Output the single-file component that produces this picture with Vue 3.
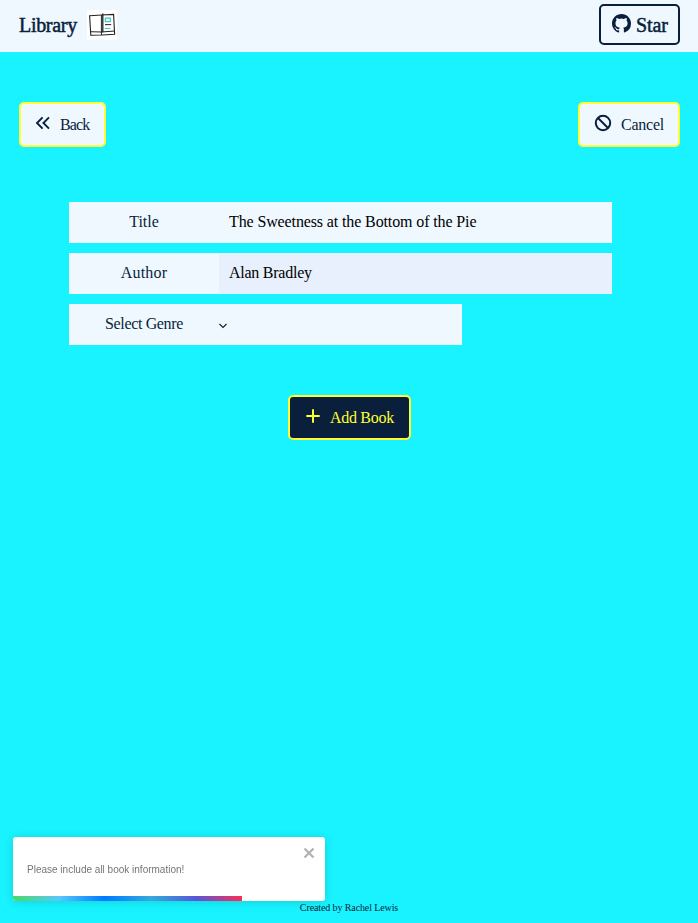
<script setup>
import { ref } from 'vue'

const title = ref('The Sweetness at the Bottom of the Pie')
const author = ref('Alan Bradley')
const toastOpen = ref(true)
</script>

<template>
  <div class="page">
    <header class="nav">
      <div class="brand">
        <span class="brand-name">Library</span>
        <svg class="book" viewBox="0 0 30 30" fill="none">
          <rect width="30" height="30" fill="#fff" />
          <path d="M2.600 5.800 14.500 5 26.600 4.400 27.600 24.300 15 25 3.800 25.300Z" stroke="#222" stroke-width="1.100" />
          <path d="M3 21.700 14.500 22 27.500 21M14.400 5v20" stroke="#222" stroke-width="1" />
          <path d="M15.800 3.400v18.800" stroke="#222" stroke-width="1.300" />
          <path d="M18.300 8.100h5v3.600h-5zM17.800 18.500h5.500" stroke="#3dc8c8" stroke-width="1.200" />
          <path d="M18 14.600h6.200" stroke="#333" stroke-width="1.100" />
        </svg>
      </div>
      <button class="star">
        <svg width="19" height="19" viewBox="0 0 16 16" fill="currentColor">
          <path d="M8 0C3.58 0 0 3.58 0 8c0 3.54 2.29 6.53 5.47 7.59.4.07.55-.17.55-.38 0-.19-.01-.82-.01-1.49-2.01.37-2.53-.49-2.69-.94-.09-.23-.48-.94-.82-1.13-.28-.15-.68-.52-.01-.53.63-.01 1.08.58 1.23.82.72 1.21 1.87.87 2.33.66.07-.52.28-.87.51-1.07-1.78-.2-3.64-.89-3.64-3.95 0-.87.31-1.59.82-2.15-.08-.2-.36-1.02.08-2.12 0 0 .67-.21 2.2.82a7.6 7.6 0 0 1 4 0c1.53-1.04 2.2-.82 2.2-.82.44 1.1.16 1.92.08 2.12.51.56.82 1.27.82 2.15 0 3.07-1.87 3.75-3.65 3.95.29.25.54.73.54 1.48 0 1.07-.01 1.93-.01 2.2 0 .21.15.46.55.38A8 8 0 0 0 16 8c0-4.42-3.58-8-8-8z" />
        </svg>
        <span class="star-text">Star</span>
      </button>
    </header>

    <div class="actions">
      <button class="btn back">
        <svg width="16" height="16" viewBox="0 0 16 16" fill="none" stroke="currentColor" stroke-width="1.9">
          <path d="M7.6 2.3 2 8l5.6 5.7M14 2.3 8.4 8l5.6 5.7" />
        </svg>
        <span class="back-text">Back</span>
      </button>
      <button class="btn cancel">
        <svg width="18" height="18" viewBox="0 0 18 18" fill="none" stroke="currentColor" stroke-width="2">
          <circle cx="9" cy="9" r="7.2" />
          <path d="m4 4 10 10" />
        </svg>
        <span class="cancel-text">Cancel</span>
      </button>
    </div>

    <form class="form" @submit.prevent>
      <div class="row">
        <label class="title-label" for="title">Title</label>
        <input id="title" v-model="title" class="title-input" type="text" />
      </div>
      <div class="row">
        <label class="author-label" for="author">Author</label>
        <input id="author" v-model="author" class="author-input" type="text" />
      </div>
      <div class="row genre">
        <label class="genre-label">Select Genre</label>
        <svg class="chevron" width="8" height="6" viewBox="0 0 8 6" fill="none" stroke="currentColor" stroke-width="1.1">
          <path d="m.5 1 3.500 3.500L7.500 1" />
        </svg>
      </div>
      <button class="btn add">
        <svg width="16" height="16" viewBox="0 0 16 16" fill="none" stroke="currentColor" stroke-width="2">
          <path d="M8 1.300v13.400M1.300 8h13.400" />
        </svg>
        <span class="add-text">Add Book</span>
      </button>
    </form>

    <footer class="footer"><span>Created by Rachel Lewis</span></footer>

    <div v-if="toastOpen" class="toast">
      <span class="toast-text">Please include all book information!</span>
      <button class="close" aria-label="Close" @click="toastOpen = false">
        <svg width="12" height="12" viewBox="0 0 12 12" fill="none" stroke="#b3b3b3" stroke-width="2.300">
          <path d="m1.500 1.500 9 9m0-9-9 9" />
        </svg>
      </button>
      <div class="progress"></div>
    </div>
  </div>
</template>

<style>
body {
  background: #18f3ff;
}
</style>

<style scoped>
.page {
  box-sizing: border-box;
  height: 923px;
  display: flex;
  flex-direction: column;
  background: #18f3ff;
  color: #0a1f3c;
  font-family: "Liberation Serif", serif;
  font-size: 16px;
  line-height: 20px;
}
.page * {
  box-sizing: border-box;
}
svg {
  display: block;
  flex: none;
}
button {
  font: inherit;
  color: inherit;
  margin: 0;
  padding: 0;
}
span,
label {
  white-space: nowrap;
}
.nav {
  height: 52px;
  flex: none;
  display: flex;
  align-items: flex-start;
  justify-content: space-between;
  padding: 4px 18px 0 19px;
  background: #f0f8ff;
}
.brand {
  display: flex;
  align-items: center;
  padding-top: 6px;
}
.brand-name {
  width: 68px;
  font-size: 20px;
  letter-spacing: -0.3px;
  -webkit-text-stroke: 0.5px currentColor;
}
.book {
  width: 30px;
  height: 30px;
}
.star {
  width: 81px;
  height: 41px;
  display: flex;
  align-items: center;
  padding: 0 0 3px 11px;
  gap: 5px;
  border: 2px solid #0a1f3c;
  border-radius: 5px;
  background: #f0f8ff;
  font-size: 20px;
}
.star-text {
  padding-top: 4px;
  letter-spacing: -0.1px;
  -webkit-text-stroke: 0.5px currentColor;
}
.actions {
  display: flex;
  justify-content: space-between;
  padding: 50px 18px 0 19px;
}
.btn {
  height: 45px;
  display: flex;
  align-items: center;
  border: 2px solid #ffff33;
  border-radius: 5px;
  background: #f0f8ff;
  padding: 0 0 3px 14px;
}
.btn span {
  padding-top: 3px;
}
.back {
  width: 87px;
  gap: 9px;
}
.back-text {
  letter-spacing: -0.85px;
}
.cancel {
  width: 102px;
  gap: 9px;
}
.cancel-text {
  letter-spacing: -0.25px;
}
.form {
  display: flex;
  flex-direction: column;
  gap: 10px;
  padding: 55px 86px 0 69px;
}
.row {
  height: 41px;
  display: flex;
  align-items: center;
  background: #f0f8ff;
}
.row label {
  width: 150px;
  padding-bottom: 1px;
  text-align: center;
}
.row .author-label {
  letter-spacing: 0.2px;
}
.row .genre-label {
  letter-spacing: -0.35px;
}
.row input {
  flex: 1;
  min-width: 0;
  height: 41px;
  padding: 0 10px 1px;
  border: 0;
  border-radius: 0;
  outline: 0;
  background: #f0f8ff;
  color: #000;
  font: inherit;
  letter-spacing: -0.12px;
}
.row .author-input {
  background: #e8f0fe;
  letter-spacing: -0.25px;
}
.genre {
  width: 393px;
}
.chevron {
  margin-top: 2px;
}
.add {
  align-self: flex-start;
  width: 123px;
  margin: 40px 0 0 219px;
  gap: 9px;
  padding-left: 15px;
  background: #0a1f3c;
  color: #ffff33;
}
.add-text {
  letter-spacing: -0.3px;
}
.footer {
  margin-top: auto;
  height: 24px;
  display: flex;
  justify-content: center;
  font-size: 10px;
  line-height: 18px;
  letter-spacing: -0.11px;
}
.toast {
  position: fixed;
  left: 13px;
  bottom: 22px;
  width: 312px;
  height: 64px;
  display: flex;
  align-items: center;
  padding: 2px 0 0 14px;
  overflow: hidden;
  border-radius: 3px;
  background: #fff;
  color: #757575;
  font-family: "Liberation Sans", sans-serif;
  font-size: 10px;
  box-shadow: 0 1px 10px rgba(0, 0, 0, 0.15);
}
.close {
  position: absolute;
  top: 10px;
  right: 10px;
  border: 0;
  background: transparent;
}
.progress {
  position: absolute;
  left: 0;
  bottom: 0;
  width: 229px;
  height: 5px;
  background: linear-gradient(to right, #4cd964, #5ac8fa, #007aff, #34aadc, #5856d6, #ff2d55);
}
</style>
